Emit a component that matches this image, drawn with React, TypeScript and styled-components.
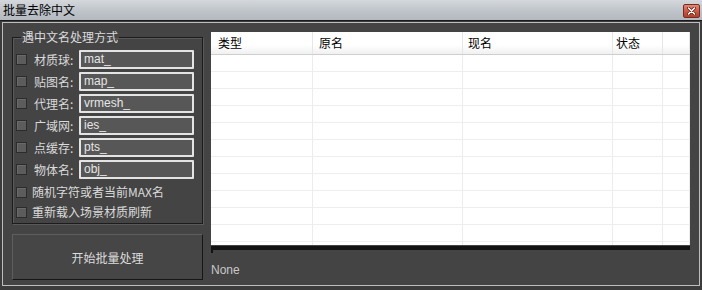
import React from 'react';
import styled, { createGlobalStyle } from 'styled-components';

const GlobalStyle = createGlobalStyle`
  html, body {
    margin: 0;
    padding: 0;
    background: #444444;
    overflow: hidden;
  }
  body {
    font-family: "Liberation Sans", "Noto Sans CJK SC", sans-serif;
  }
`

const cjk = `"Noto Sans CJK SC", "Liberation Sans", sans-serif`

const Window = styled.div`
  width: 702px;
  height: 290px;
  display: flex;
  flex-direction: column;
  background: #3a3a3a;
`

const TitleBar = styled.div`
  height: 20px;
  display: flex;
  align-items: center;
  justify-content: space-between;
  padding: 0 2px 0 3px;
  background: linear-gradient(180deg, #d4d8dc 0%, #bfc4ca 55%, #b3b9bf 100%);
`

const Title = styled.span`
  font-family: ${cjk};
  font-size: 12px;
  line-height: 14px;
  color: #000;
`

const CloseButton = styled.div`
  width: 17px;
  height: 14px;
  margin-top: 1px;
  box-sizing: border-box;
  border: 1px solid #7a2a20;
  border-radius: 2px;
  background: linear-gradient(180deg, #e08a78 0%, #c95a44 50%, #b0402c 100%);
  display: flex;
  align-items: center;
  justify-content: center;
`

const Frame = styled.div`
  flex: 1;
  border-top: 1px solid #1a1a1a;
  padding: 1px 2px 4px 2px;
  background: #3c3c3c;
  display: flex;
`

const Inner = styled.div`
  flex: 1;
  border: 1px solid #bdbdbd;
  background: #444444;
  display: grid;
  grid-template-columns: 191px 479px;
  column-gap: 8px;
  padding-left: 9px;
`

const LeftColumn = styled.div`
  display: flex;
  flex-direction: column;
  padding-top: 7px;
`

const GroupBox = styled.fieldset`
  margin: 0;
  padding: 6px 8px 1px 3px;
  border: 1px solid #1c1c1c;
  box-shadow: inset 1px 1px 0 #5a5a5a, 1px 1px 0 #5a5a5a;
  min-width: 0;
  display: flex;
  flex-direction: column;
`

const Legend = styled.legend`
  font-family: ${cjk};
  font-size: 12px;
  line-height: 14px;
  color: #dcdcdc;
  padding: 0 1px;
  margin-left: 5px;
`

const FieldRow = styled.div`
  height: 19px;
  display: flex;
  align-items: center;
  margin-bottom: 3px;
`

const CheckRow = styled.div`
  height: 20px;
  display: flex;
  align-items: center;
`

const Box = styled.span`
  width: 11px;
  height: 11px;
  flex: none;
  box-sizing: border-box;
  background: #5c5c5c;
  border: 1px solid #2c2c2c;
  box-shadow: inset 1px 1px 0 #6a6a6a;
`

const Label = styled.span<{ $gap: number; $width?: number }>`
  font-family: ${cjk};
  font-size: 12px;
  line-height: 14px;
  color: #dadada;
  margin-left: ${p => p.$gap}px;
  width: ${p => (p.$width ? `${p.$width}px` : 'auto')};
  white-space: nowrap;
`

const TextInput = styled.div`
  width: 115px;
  height: 19px;
  box-sizing: border-box;
  border: 2px solid #e4e4e4;
  border-radius: 1px;
  background: #575757;
  color: #e6e6e6;
  font-size: 12px;
  line-height: 15px;
  padding-left: 3px;
`

const ActionButton = styled.div`
  margin-top: 10px;
  height: 46px;
  box-sizing: border-box;
  border: 1px solid;
  border-color: #5e5e5e #161616 #161616 #5e5e5e;
  background: #464646;
  display: flex;
  align-items: center;
  justify-content: center;
  font-family: ${cjk};
  font-size: 12px;
  color: #dcdcdc;
`

const RightColumn = styled.div`
  display: flex;
  flex-direction: column;
  padding-top: 9px;
`

const Table = styled.div`
  height: 213px;
  background: #fff;
  overflow: hidden;
  display: flex;
  flex-direction: column;
`

const cols = '102px 150px 150px 50px 1fr'

const HeaderRow = styled.div`
  height: 23px;
  flex: none;
  display: grid;
  grid-template-columns: ${cols};
  box-sizing: border-box;
  border-bottom: 1px solid #cfcfcf;
  background: linear-gradient(180deg, #ffffff 0%, #ffffff 60%, #f0f0f0 100%);
`

const HeaderCell = styled.div<{ $pad: number }>`
  border-right: 1px solid #e6e6e6;
  padding: 3px 0 0 ${p => p.$pad}px;
  font-family: ${cjk};
  font-size: 12px;
  line-height: 16px;
  color: #000;
`

const BodyRow = styled.div`
  height: 17px;
  flex: none;
  display: grid;
  grid-template-columns: ${cols};
  box-sizing: border-box;
  border-bottom: 1px solid #eeeeee;
`

const BodyCell = styled.div`
  border-right: 1px solid #ececec;
`

const ScrollLine = styled.div`
  height: 4px;
  background: #121212;
  border-left: 2px solid #121212;
  position: relative;
  margin-top: 1px;
  &::after {
    content: '';
    position: absolute;
    left: -2px;
    top: 4px;
    width: 2px;
    height: 3px;
    background: #121212;
  }
`

const Status = styled.div`
  margin-top: 13px;
  font-size: 12px;
  color: #c8c8c8;
`

const fields = [
  { label: '材质球:', value: 'mat_' },
  { label: '贴图名:', value: 'map_' },
  { label: '代理名:', value: 'vrmesh_' },
  { label: '广域网:', value: 'ies_' },
  { label: '点缓存:', value: 'pts_' },
  { label: '物体名:', value: 'obj_' },
]

const options = ['随机字符或者当前MAX名', '重新载入场景材质刷新']

const headers = [
  { text: '类型', pad: 7 },
  { text: '原名', pad: 6 },
  { text: '现名', pad: 5 },
  { text: '状态', pad: 3 },
  { text: '', pad: 0 },
]

const App: React.FC = () => {
  const rows = Array.from({ length: 12 })

  return (
    <>
      <GlobalStyle />
      <Window>
        <TitleBar>
          <Title>批量去除中文</Title>
          <CloseButton>
            <svg width="9" height="8" viewBox="0 0 9 8">
              <path d="M1.5 1 L7.5 7 M7.5 1 L1.5 7" stroke="#5a1a10" strokeWidth="3" strokeLinecap="round" />
              <path d="M1.5 1 L7.5 7 M7.5 1 L1.5 7" stroke="#fff" strokeWidth="1.6" strokeLinecap="round" />
            </svg>
          </CloseButton>
        </TitleBar>
        <Frame>
          <Inner>
            <LeftColumn>
              <GroupBox>
                <Legend>遇中文名处理方式</Legend>
                {fields.map(f => (
                  <FieldRow key={f.label}>
                    <Box />
                    <Label $gap={7} $width={45}>{f.label}</Label>
                    <TextInput>{f.value}</TextInput>
                  </FieldRow>
                ))}
                {options.map(o => (
                  <CheckRow key={o}>
                    <Box />
                    <Label $gap={5}>{o}</Label>
                  </CheckRow>
                ))}
              </GroupBox>
              <ActionButton>开始批量处理</ActionButton>
            </LeftColumn>
            <RightColumn>
              <Table>
                <HeaderRow>
                  {headers.map((h, i) => (
                    <HeaderCell key={i} $pad={h.pad}>{h.text}</HeaderCell>
                  ))}
                </HeaderRow>
                {rows.map((_, i) => (
                  <BodyRow key={i}>
                    {headers.map((_, j) => (
                      <BodyCell key={j} />
                    ))}
                  </BodyRow>
                ))}
              </Table>
              <ScrollLine />
              <Status>None</Status>
            </RightColumn>
          </Inner>
        </Frame>
      </Window>
    </>
  );
}

export default App;
